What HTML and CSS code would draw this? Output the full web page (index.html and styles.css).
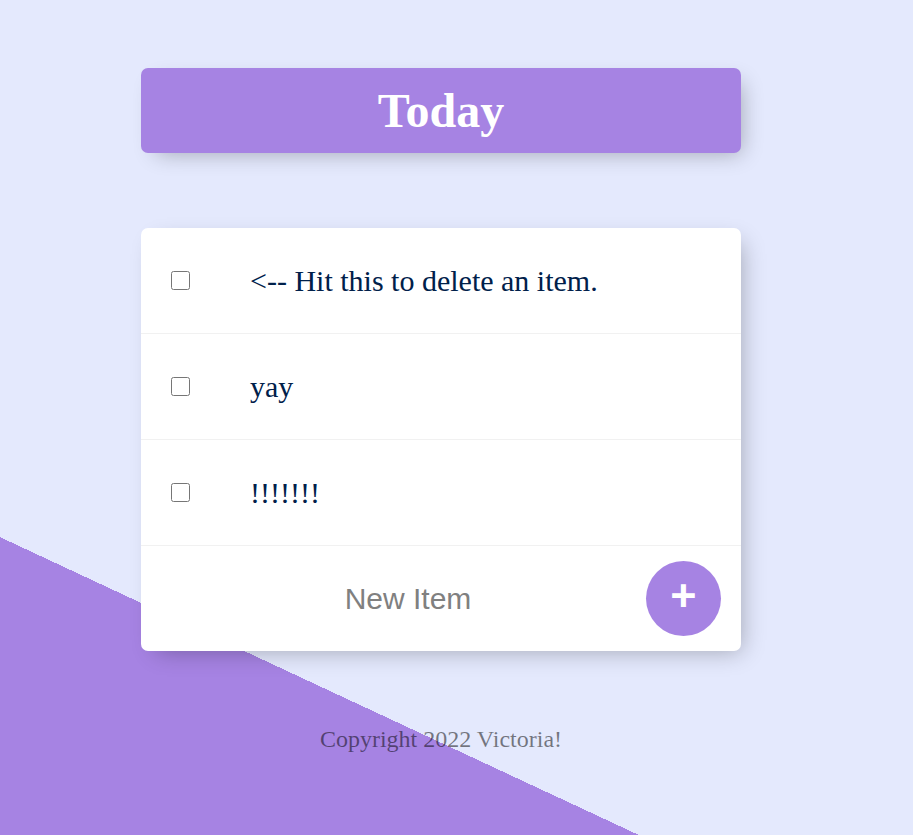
FILE: index.html
```html
<!DOCTYPE html>
<html lang="en">
<head>
<meta charset="utf-8">
<title>To Do List</title>
<link rel="stylesheet" href="styles.css">
</head>
<body>
<main class="column">
  <div class="box heading">
    <h1 class="title">Today</h1>
  </div>
  <div class="box list">
    <div class="item">
      <input class="check" type="checkbox">
      <p class="text">&lt;-- Hit this to delete an item.</p>
    </div>
    <div class="item">
      <input class="check" type="checkbox">
      <p class="text">yay</p>
    </div>
    <div class="item">
      <input class="check" type="checkbox">
      <p class="text">!!!!!!!</p>
    </div>
    <div class="item last">
      <form class="new-form">
        <input class="new-input" type="text" placeholder="New Item" autocomplete="off">
        <button class="add-btn" type="button">+</button>
      </form>
    </div>
  </div>
  <footer class="footer">Copyright 2022 Victoria!</footer>
</main>
</body>
</html>
```

FILE: styles.css
```css
html {
  background-color: #E4E9FD;
  background-image: linear-gradient(25deg, #A683E3 50%, #E4E9FD 50%);
  background-size: 100% 1500px;
  background-repeat: no-repeat;
  font-family: "Liberation Serif", "Times New Roman", serif;
}

body {
  margin: 0;
}

.column {
  width: 600px;
  margin-left: 141px;
  padding-top: 68px;
}

.box {
  background: #fff;
  border-radius: 7px;
  box-shadow: 7.5px 7.5px 22.5px -7.5px rgba(0, 0, 0, 0.3);
}

.heading {
  background-color: #A683E3;
  text-align: center;
}

.title {
  margin: 0;
  padding: 15px;
  font-size: 48px;
  line-height: 55px;
  font-weight: bold;
  color: #fff;
}

.list {
  margin-top: 75px;
}

.item {
  min-height: 105px;
  display: flex;
  align-items: center;
  border-bottom: 1px solid #F1F1F1;
}

.item.last {
  border-bottom: 0;
}

.check {
  width: 19px;
  height: 19px;
  margin: 0 30px;
  flex: none;
}

.text {
  margin: 0;
  padding: 30px;
  font-size: 30px;
  font-weight: 200;
  color: #00204a;
}

.new-form {
  display: flex;
  align-items: center;
  gap: 1px;
  margin-left: 30px;
}

.new-input {
  text-align: center;
  height: 90px;
  width: 474px;
  padding: 0;
  border: none;
  background: transparent;
  font-family: "Liberation Sans", Arial, sans-serif;
  font-size: 30px;
  font-weight: 200;
  outline: none;
}

.new-input::placeholder {
  color: grey;
  opacity: 1;
}

.add-btn {
  width: 75px;
  height: 75px;
  border-radius: 50%;
  border: 0;
  background-color: #A683E3;
  color: #fff;
  font-family: "Liberation Sans", Arial, sans-serif;
  font-size: 45px;
  font-weight: bold;
  line-height: 1;
  padding: 0 0 6px;
}

.footer {
  margin-top: 75px;
  text-align: center;
  font-size: 24px;
  color: rgba(0, 0, 0, 0.5);
}
```
